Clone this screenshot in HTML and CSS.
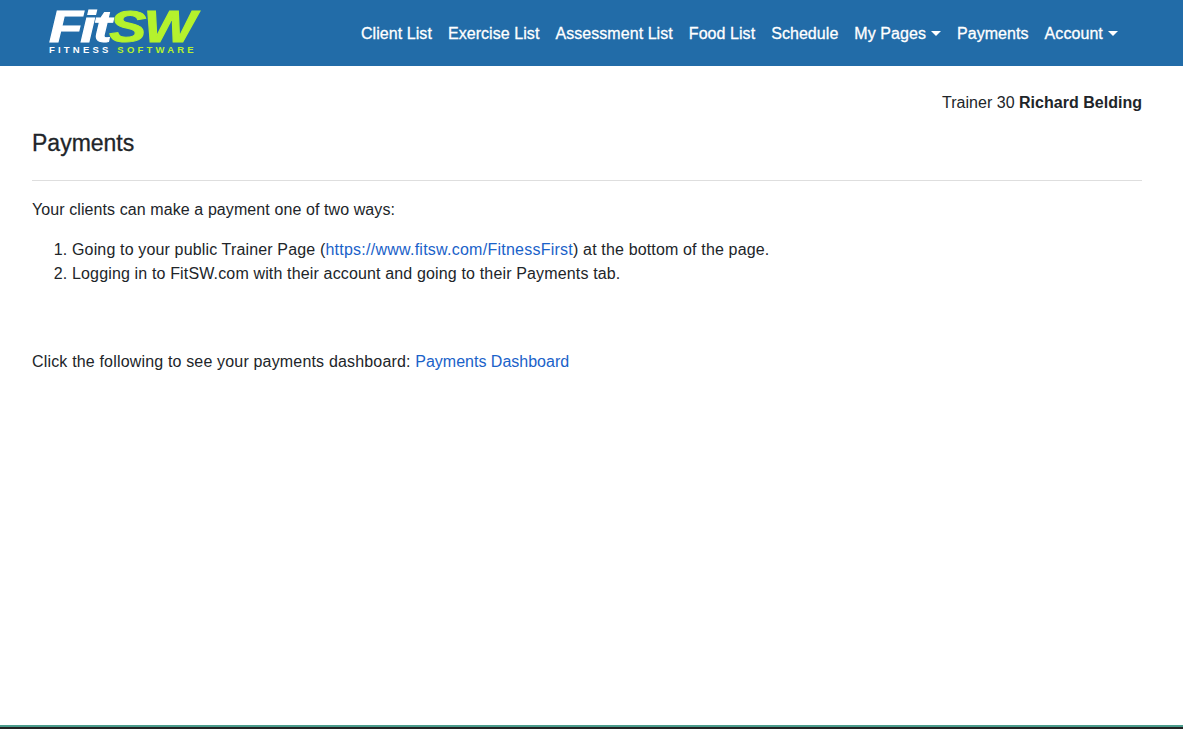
FILE: index.html
```html
<!DOCTYPE html>
<html lang="en">
<head>
  <meta charset="UTF-8">
  <meta name="viewport" content="width=device-width, initial-scale=1.0">
  <title>Payments</title>
  <link rel="stylesheet" href="styles.css">
</head>
<body>

  <nav class="navbar">
    <a class="logo" href="#">
      <span class="logo-main">Fit<span class="green">SW</span></span>
      <span class="logo-sub">FITNESS <span class="green">SOFTWARE</span></span>
    </a>
    <ul class="nav-links">
      <li><a href="#">Client List</a></li>
      <li><a href="#">Exercise List</a></li>
      <li><a href="#">Assessment List</a></li>
      <li><a href="#">Food List</a></li>
      <li><a href="#">Schedule</a></li>
      <li><a href="#">My Pages<span class="caret"></span></a></li>
      <li><a href="#">Payments</a></li>
      <li><a href="#">Account<span class="caret"></span></a></li>
    </ul>
  </nav>

  <main class="content">
    <p class="trainer">Trainer 30 <strong>Richard Belding</strong></p>
    <h1>Payments</h1>
    <hr>
    <p class="intro">Your clients can make a payment one of two ways:</p>
    <ol>
      <li>Going to your public Trainer Page (<a href="#">https://www.fitsw.com/FitnessFirst</a>) at the bottom of the page.</li>
      <li>Logging in to FitSW.com with their account and going to their Payments tab.</li>
    </ol>
    <p class="dashboard">Click the following to see your payments dashboard: <a href="#">Payments Dashboard</a></p>
  </main>

  <footer class="footer"></footer>

</body>
</html>
```

FILE: styles.css
```css
* {
  margin: 0;
  padding: 0;
  box-sizing: border-box;
}

html, body {
  height: 100%;
}

body {
  font-family: 'Liberation Sans', Arial, sans-serif;
  font-size: 16px;
  line-height: 24px;
  letter-spacing: 0.15px;
  color: #212529;
  background: #fff;
  display: flex;
  flex-direction: column;
  overflow: hidden;
}

a {
  color: #1a62c9;
  text-decoration: none;
}

/* Top bar */
.navbar {
  height: 66px;
  background: #226ca8;
  display: flex;
  align-items: flex-start;
  padding-left: 49px;
}

.logo {
  width: 152px;
  display: flex;
  flex-direction: column;
  color: #fff;
  padding-top: 8px;
}

.logo-main {
  font-size: 45px;
  line-height: 37px;
  font-weight: bold;
  font-style: italic;
  letter-spacing: -2px;
  white-space: nowrap;
  -webkit-text-stroke: 1px currentColor;
  transform: scaleX(1.23);
  transform-origin: left center;
}

.logo-sub {
  font-size: 9.5px;
  line-height: 9px;
  font-weight: bold;
  letter-spacing: 3.2px;
  white-space: nowrap;
}

.green {
  color: #b5f22d;
}

.nav-links {
  list-style: none;
  display: flex;
  gap: 16px;
  margin-left: 160px;
  padding-top: 22px;
  letter-spacing: 0.06px;
}

.nav-links a {
  color: #fff;
  font-weight: 500;
  -webkit-text-stroke: 0.3px #fff;
}

.caret {
  display: inline-block;
  margin-left: 5px;
  vertical-align: 3px;
  border-top: 5px solid #fff;
  border-left: 5px solid transparent;
  border-right: 5px solid transparent;
}

/* Page content */
.content {
  flex: 1;
  padding: 25px 41px 0 32px;
}

.trainer {
  text-align: right;
  letter-spacing: 0.02px;
}

h1 {
  font-size: 23px;
  line-height: 28px;
  font-weight: 500;
  margin-top: 14px;
  letter-spacing: 0;
  -webkit-text-stroke: 0.3px #212529;
}

hr {
  border: 0;
  border-top: 1px solid #dedede;
  margin-top: 23px;
}

.intro {
  margin-top: 17px;
  letter-spacing: 0.09px;
}

ol {
  margin-top: 16px;
  padding-left: 40px;
}

ol a {
  letter-spacing: 0.25px;
}

.dashboard {
  margin-top: 64px;
  letter-spacing: 0.17px;
}

.dashboard a {
  letter-spacing: 0;
}

/* Footer strip along the bottom edge */
.footer {
  height: 4px;
  background: #222;
  border-top: 2px solid #4a9c8c;
}
```
